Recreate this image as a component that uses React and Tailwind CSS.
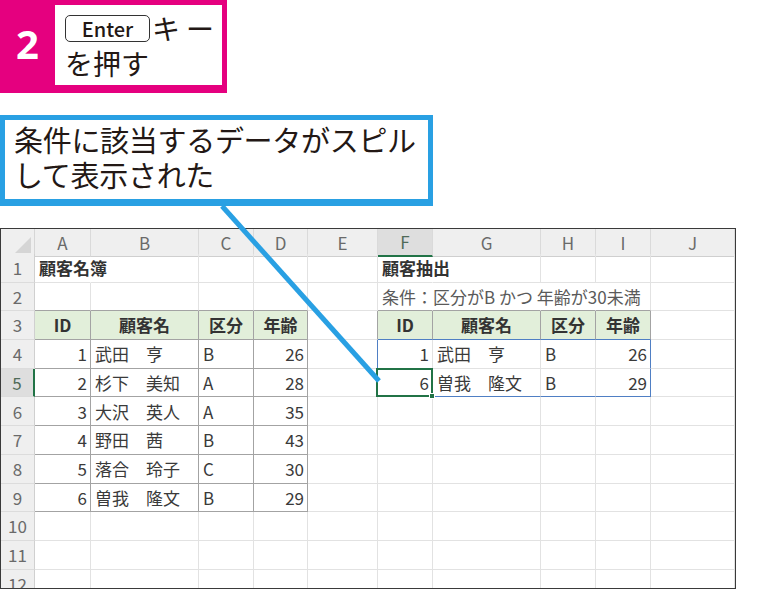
import React from 'react'

const COLS = ['A', 'B', 'C', 'D', 'E', 'F', 'G', 'H', 'I', 'J']

const H = (t) => ({ t, head: true })
const L = (t) => ({ t, align: 'left' })
const R = (t) => ({ t, align: 'right' })

// sheet contents, row -> column index -> cell
const DATA = {
  1: { 0: { t: '顧客名簿', bold: true, over: true }, 5: { t: '顧客抽出', bold: true, over: true } },
  2: { 5: { t: '条件：区分がB かつ 年齢が30未満', note: true, over: true } },
  3: { 0: H('ID'), 1: H('顧客名'), 2: H('区分'), 3: H('年齢'), 5: H('ID'), 6: H('顧客名'), 7: H('区分'), 8: H('年齢') },
  4: { 0: R('1'), 1: L('武田　亨'), 2: L('B'), 3: R('26'), 5: R('1'), 6: L('武田　亨'), 7: L('B'), 8: R('26') },
  5: { 0: R('2'), 1: L('杉下　美知'), 2: L('A'), 3: R('28'), 5: R('6'), 6: L('曽我　隆文'), 7: L('B'), 8: R('29') },
  6: { 0: R('3'), 1: L('大沢　英人'), 2: L('A'), 3: R('35') },
  7: { 0: R('4'), 1: L('野田　茜'), 2: L('B'), 3: R('43') },
  8: { 0: R('5'), 1: L('落合　玲子'), 2: L('C'), 3: R('30') },
  9: { 0: R('6'), 1: L('曽我　隆文'), 2: L('B'), 3: R('29') },
}

function rightBorder(r, c) {
  const leftTable = c <= 3 && r >= 3 && r <= 9
  const rightHead = c >= 5 && c <= 8 && r === 3
  const spill = c >= 5 && c <= 8 && (r === 4 || r === 5)
  if ((r === 1 && (c === 0 || c === 5)) || (r === 2 && c >= 5 && c <= 7)) return 'border-r-transparent'
  if (c === 4 && (r === 4 || r === 5)) return 'border-r-[#4f7fc4]'
  if (spill && c === 8) return 'border-r-[#4f7fc4]'
  if (leftTable || rightHead || (c === 4 && r === 3)) return 'border-r-[#a3a3a3]'
  return 'border-r-[#e2e2e2]'
}

function bottomBorder(r, c) {
  const leftTable = c <= 3 && r >= 3 && r <= 9
  const rightHead = c >= 5 && c <= 8 && r === 3
  if (rightHead) return 'border-b-[#4f7fc4]'
  if (c >= 5 && c <= 8 && r === 5) return 'border-b-[#4f7fc4]'
  if (leftTable) return 'border-b-[#a3a3a3]'
  if (r === 2 && (c <= 3 || (c >= 5 && c <= 8))) return 'border-b-[#a3a3a3]'
  return 'border-b-[#e2e2e2]'
}

function Cell({ r, c }) {
  const d = (DATA[r] && DATA[r][c]) || null
  let inner = null
  let extra = ''
  if (d) {
    if (d.head) {
      extra = 'bg-[#e2efda] justify-center font-bold text-[#333]'
    } else if (d.align === 'right') {
      extra = 'justify-end pr-[3px] text-[#3a3a3a]'
    } else if (d.note) {
      extra = 'pl-[4px] text-[#5a5a5a]'
    } else if (d.bold) {
      extra = 'pl-[4px] font-bold text-[#333]'
    } else {
      extra = 'pl-[4px] text-[#3a3a3a]'
    }
    inner = <span className="whitespace-nowrap">{d.t}</span>
  }
  const selected = r === 5 && c === 5
  const visible = (d && d.over) || selected
  return (
    <div
      className={`relative flex items-center border-r border-b text-[17px] ${rightBorder(r, c)} ${bottomBorder(r, c)} ${extra} ${visible ? 'overflow-visible z-[2]' : 'overflow-hidden'}`}
    >
      {inner}
      {selected && (
        <div className="absolute -left-[2px] -top-[1px] -right-[1px] -bottom-[1px] border-2 border-[#217346]">
          <div className="absolute -right-[4px] -bottom-[4px] w-[6px] h-[6px] bg-[#217346] border border-white" />
        </div>
      )}
    </div>
  )
}

function Sheet() {
  const grid = 'grid grid-cols-[34px_56px_108px_55px_54px_70px_55px_108px_55px_55px_84px]'
  return (
    <div className="w-[736px] h-[361px] border border-[#3a3a3a] overflow-hidden bg-white">
      <div className={`${grid} h-[25px]`}>
        <div className="bg-[#efefef] border-r border-b border-r-[#d6d6d6] border-b-[#cfcfcf] flex items-end justify-end pr-[3px] pb-[3px]">
          <svg width="16" height="16" viewBox="0 0 16 16">
            <polygon points="16,0 16,16 0,16" fill="#d5d5d5" />
          </svg>
        </div>
        {COLS.map((l, i) => (
          <div
            key={l}
            className={`flex items-center justify-center text-[17px] border-r border-r-[#dadada] ${i === 5 ? 'bg-[#dedede] border-b-2 border-b-[#217346] text-[#4f6b58]' : 'bg-[#efefef] border-b border-b-[#cfcfcf] text-[#6a6a6a]'}`}
          >
            {l}
          </div>
        ))}
      </div>
      {Array.from({ length: 12 }, (_, k) => k + 1).map((r) => (
        <div key={r} className={`${grid} h-[28.7px]`}>
          <div
            className={`flex items-center justify-center text-[17px] border-b border-b-[#dcdcdc] ${r === 5 ? 'bg-[#dedede] border-r-2 border-r-[#217346] text-[#4f6b58]' : 'bg-[#efefef] border-r border-r-[#d0d0d0] text-[#6a6a6a]'}`}
          >
            {r}
          </div>
          {COLS.map((l, c) => (
            <Cell key={l} r={r} c={c} />
          ))}
        </div>
      ))}
    </div>
  )
}

export default function App() {
  return (
    <div className="relative w-[783px] h-[589px] bg-white overflow-hidden font-['Noto_Sans_CJK_JP','Noto_Sans',sans-serif] text-[#231815]">
      {/* step badge */}
      <div className="flex w-[227px] h-[93px] bg-[#e5007f] pt-[5px] pr-[5px] pb-[8px]">
        <div className="w-[55px] flex items-center justify-center text-white text-[40px] font-bold font-['Noto_Sans',sans-serif] leading-none pb-[2px]">
          2
        </div>
        <div className="flex-1 bg-white pl-[10px] pt-[6px] text-[28px] leading-[35px]">
          <div className="flex items-center">
            <span className="inline-flex items-center justify-center w-[85px] h-[27px] border border-[#333] rounded-[5px] text-[20px] font-medium leading-none">
              Enter
            </span>
            <span className="ml-[2px] tracking-[6px]">キー</span>
          </div>
          <div>を押す</div>
        </div>
      </div>

      {/* callout */}
      <div className="mt-[22px] w-[433px] h-[91px] border-[5px] border-b-[7px] border-[#29a0e3] pl-[9px] pt-[2px] text-[29px] leading-[35px] tracking-[-0.3px] whitespace-nowrap">
        <div>条件に該当するデータがスピル</div>
        <div>して表示された</div>
      </div>

      {/* spreadsheet */}
      <div className="mt-[22px]">
        <Sheet />
      </div>

      {/* leader line */}
      <svg className="absolute left-0 top-0 pointer-events-none z-10" width="783" height="589">
        <line x1="222" y1="206" x2="379" y2="381" stroke="#29a0e3" strokeWidth="5" />
      </svg>
    </div>
  )
}
